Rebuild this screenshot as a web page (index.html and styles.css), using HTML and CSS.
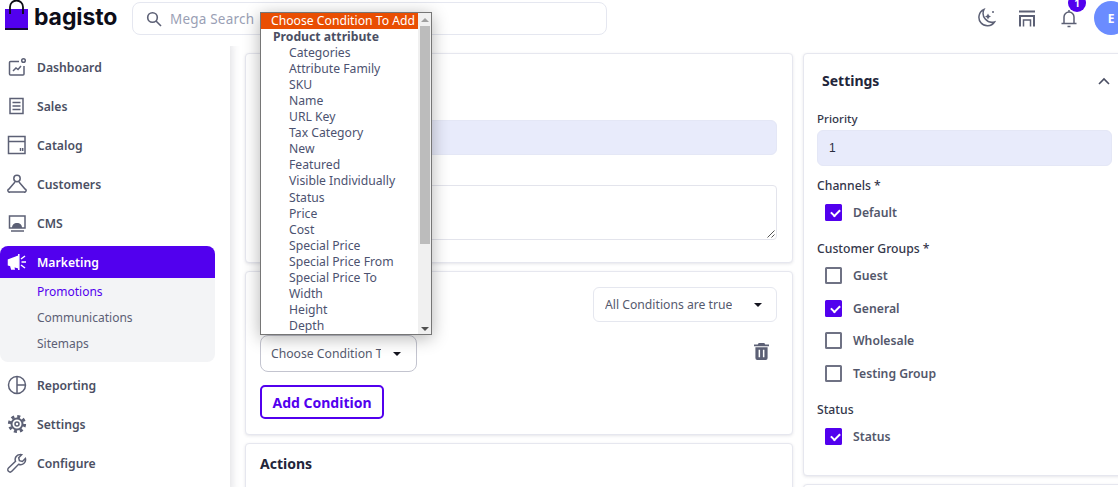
FILE: index.html
```html
<!DOCTYPE html>
<html lang="en">
<head>
<meta charset="utf-8">
<title>Bagisto - Cart rule</title>
<link rel="stylesheet" href="styles.css">
</head>
<body>
<header class="topbar">
  <div class="logo">
    <svg class="logo-bag" width="24" height="31" viewBox="0 0 24 31"><rect x="0" y="9" width="23" height="21" fill="#5200ee"/><rect x="0" y="28" width="23" height="2" fill="#15083a"/><path d="M5 14V7a6.500 6.500 0 0 1 13 0v7" fill="none" stroke="#0c0c14" stroke-width="1.800"/></svg>
    <span class="logo-text">bagisto</span>
  </div>
  <div class="search">
    <svg width="16" height="16" viewBox="0 0 16 16" fill="none" stroke="#5c6075" stroke-width="1.600"><circle cx="6.500" cy="6.500" r="4.800"/><path d="M10 10l5 5"/></svg>
    <span>Mega Search</span>
  </div>
  <div class="top-actions">
    <svg class="ic-moon" width="20" height="20" viewBox="0 0 20 20" fill="none" stroke="#5c6075" stroke-width="1.500"><path d="M8 1.500a8.500 8.500 0 1 0 10.500 12.500 9 9 0 0 1-10.500-12.500z"/><path d="M12 5.500l1 2 2 1-2 1-1 2-1-2-2-1 2-1z" fill="#5c6075" stroke="none"/><circle cx="17" cy="4" r="1" fill="#5c6075" stroke="none"/></svg>
    <svg class="ic-store" width="18" height="17" viewBox="0 0 18 17" fill="none" stroke="#5c6075" stroke-width="2"><path d="M1 1.500h16M1 6h16M2 6v10.500M16 6v10.500"/><path d="M5.500 16.500V10h7v6.500" stroke-width="1.500"/></svg>
    <span class="bell">
      <svg width="16" height="19" viewBox="0 0 16 19" fill="none" stroke="#5c6075" stroke-width="1.500"><path d="M3 14V8a5 5 0 0 1 10 0v6M0.500 14.500h15M8 1v2M6.500 17.500h3"/></svg>
      <span class="badge">1</span>
    </span>
    <span class="avatar">E</span>
  </div>
</header>

<div class="layout">
  <nav class="sidebar">
    <a class="nav-item">
      <svg class="nav-ic" viewBox="0 0 20 20" fill="none" stroke="#5c6075" stroke-width="1.500"><path d="M12 4.500H3.500a1 1 0 0 0-1 1V17a1 1 0 0 0 1 1H16a1 1 0 0 0 1-1V9"/><circle cx="16.500" cy="3.500" r="1.800"/><path d="M6 14l3-3 2 1.500 3-3.500"/></svg>
      <span>Dashboard</span>
    </a>
    <a class="nav-item">
      <svg class="nav-ic" viewBox="0 0 20 20" fill="none" stroke="#5c6075" stroke-width="1.500"><rect x="3" y="2.500" width="13" height="15"/><path d="M5.500 6.500h8M5.500 10h8M5.500 13.500h8"/></svg>
      <span>Sales</span>
    </a>
    <a class="nav-item">
      <svg class="nav-ic" viewBox="0 0 20 20" fill="none" stroke="#5c6075" stroke-width="1.500"><rect x="1.500" y="1.500" width="16.500" height="17"/><path d="M1.500 6.500h16.500M13.500 13v3M15.700 13v3"/></svg>
      <span>Catalog</span>
    </a>
    <a class="nav-item">
      <svg class="nav-ic" viewBox="0 0 20 20" fill="none" stroke="#5c6075" stroke-width="1.500"><circle cx="10" cy="4.500" r="3.200"/><path d="M8 8l-6 7a1.500 1.500 0 0 0 1 3h14a1.500 1.500 0 0 0 1-3l-6-7"/></svg>
      <span>Customers</span>
    </a>
    <a class="nav-item">
      <svg class="nav-ic" viewBox="0 0 20 20" fill="none" stroke="#5c6075" stroke-width="1.500"><rect x="2.500" y="3" width="15.500" height="12"/><path d="M5 15c0-3.500 2-5 5-5s5 1.500 5 5z" fill="#5c6075" stroke="none"/><path d="M4 18h13"/></svg>
      <span>CMS</span>
    </a>
    <div class="nav-group">
      <a class="nav-item active">
        <svg class="nav-ic" viewBox="0 0 20 20" fill="none" stroke="#fff" stroke-width="1.500"><path d="M1.500 8l9-3.500v11l-4-1.300 .6 2.800-2.400 0-1-3.500-2.200-.5z" fill="#fff"/><path d="M11.800 2v16M14 7l4-3M14.500 10h4.500M14 13l4 3"/></svg>
        <span>Marketing</span>
      </a>
      <div class="subnav">
        <a class="sub-item current">Promotions</a>
        <a class="sub-item">Communications</a>
        <a class="sub-item">Sitemaps</a>
      </div>
    </div>
    <a class="nav-item">
      <svg class="nav-ic" viewBox="0 0 20 20" fill="none" stroke="#5c6075" stroke-width="1.500"><circle cx="10" cy="10" r="8.500"/><path d="M10 1.500v17M10 10h8.500"/></svg>
      <span>Reporting</span>
    </a>
    <a class="nav-item">
      <svg class="nav-ic" viewBox="0 0 20 20" fill="none" stroke="#5c6075"><circle cx="10" cy="10" r="7.600" stroke-width="3" stroke-dasharray="3 2.970"/><circle cx="10" cy="10" r="5.500" stroke-width="2"/><circle cx="10" cy="10" r="2" stroke-width="1.500"/></svg>
      <span>Settings</span>
    </a>
    <a class="nav-item">
      <svg class="nav-ic" viewBox="0 0 20 20" fill="none" stroke="#5c6075" stroke-width="1.500"><path d="M13 1.500a5 5 0 0 0-4.500 6.800L1.500 15a2.300 2.300 0 0 0 3.300 3.300l6.800-7a5 5 0 0 0 6.800-5.800l-3 3-3-.8-.7-3 3-3a5 5 0 0 0-1.700-.200z"/></svg>
      <span>Configure</span>
    </a>
  </nav>

  <main class="content">
    <div class="col-main">
      <section class="card card-general">
        <h2 class="card-title">General</h2>
        <label class="field-label label-name">Name</label>
        <div class="input input-name"></div>
        <label class="field-label label-desc">Description</label>
        <div class="textarea">
          <svg class="grip" width="8" height="8" viewBox="0 0 8 8" stroke="#555" stroke-width="1"><path d="M7.500 .5L.5 7.500M7.500 4.500L4.500 7.500"/></svg>
        </div>
      </section>

      <section class="card card-conditions">
        <div class="cond-head">
          <h2 class="card-title">Conditions</h2>
          <div class="select select-all"><span class="select-text">All Conditions are true</span><i class="caret"></i></div>
        </div>
        <div class="cond-row">
          <div class="select select-cond"><span class="select-text">Choose Condition To Add</span><i class="caret"></i></div>
          <svg class="trash" width="15" height="17" viewBox="0 0 16 18"><path d="M5 0h6l1 1.500h4v2H0v-2h4zM1.500 4.500h13V16a2 2 0 0 1-2 2h-9a2 2 0 0 1-2-2z" fill="#5c6075"/><path d="M5.700 7v8M10.300 7v8" stroke="#fff" stroke-width="1.600"/></svg>
        </div>
        <button class="btn-outline" type="button">Add Condition</button>
      </section>

      <section class="card card-actions">
        <h2 class="card-title">Actions</h2>
      </section>
    </div>

    <aside class="col-side">
      <section class="card card-settings">
        <div class="settings-head">
          <h2 class="card-title">Settings</h2>
          <svg width="12" height="8" viewBox="0 0 12 8" fill="none" stroke="#4a4e63" stroke-width="1.600"><path d="M1 7l5-5 5 5"/></svg>
        </div>
        <label class="field-label side-label">Priority</label>
        <div class="input input-priority">1</div>
        <div class="group-label">Channels *</div>
        <div class="check-row first"><i class="check on"></i><span>Default</span></div>
        <div class="group-label groups">Customer Groups *</div>
        <div class="check-list">
          <div class="check-row"><i class="check"></i><span>Guest</span></div>
          <div class="check-row"><i class="check on"></i><span>General</span></div>
          <div class="check-row"><i class="check"></i><span>Wholesale</span></div>
          <div class="check-row"><i class="check"></i><span>Testing Group</span></div>
        </div>
        <div class="group-label status">Status</div>
        <div class="check-row first"><i class="check on"></i><span>Status</span></div>
      </section>
      <section class="card card-next"></section>
    </aside>
  </main>
</div>

<div class="dropdown">
  <div class="options">
    <div class="opt selected">Choose Condition To Add</div>
    <div class="opt group">Product attribute</div>
    <div class="opt">Categories</div>
    <div class="opt">Attribute Family</div>
    <div class="opt">SKU</div>
    <div class="opt">Name</div>
    <div class="opt">URL Key</div>
    <div class="opt">Tax Category</div>
    <div class="opt">New</div>
    <div class="opt">Featured</div>
    <div class="opt">Visible Individually</div>
    <div class="opt">Status</div>
    <div class="opt">Price</div>
    <div class="opt">Cost</div>
    <div class="opt">Special Price</div>
    <div class="opt">Special Price From</div>
    <div class="opt">Special Price To</div>
    <div class="opt">Width</div>
    <div class="opt">Height</div>
    <div class="opt">Depth</div>
  </div>
  <div class="scrollbar">
    <i class="arrow up"></i>
    <div class="thumb"></div>
    <i class="arrow down"></i>
  </div>
</div>
</body>
</html>
```
FILE: styles.css
```css
* { box-sizing: border-box; }
html, body { margin: 0; height: 487px; overflow: hidden; background: #fff; }
body { font-family: "Noto Sans", "Open Sans", sans-serif; color: #4b4f63; font-size: 13px; position: relative; }

.topbar { height: 36px; display: flex; align-items: flex-start; background: #fff; }
.logo { width: 132px; display: flex; padding-left: 5px; align-items: flex-start; flex: none; }
.logo-bag { display: block; flex: none; }
.logo-text { font-family: Inter, sans-serif; font-weight: 700; font-size: 23px; line-height: 30px; color: #0d0d18; margin-left: 5px; letter-spacing: -.1px; margin-top: 2px; }
.search { width: 475px; height: 33px; margin-top: 2px; border: 1px solid #e5e7f0; border-radius: 8px; display: flex; align-items: center; padding-left: 13px; gap: 8px; color: #9a9fb5; font-size: 13.500px; letter-spacing: .2px; }
.top-actions { margin-left: auto; display: flex; align-items: center; height: 36px; margin-right: -10px; }
.ic-moon { margin-right: 22px; }
.ic-store { margin-right: 25px; }
.bell { position: relative; display: block; height: 19px; margin-right: 17px; }
.bell svg { display: block; }
.badge { position: absolute; left: 7px; top: -15px; width: 18px; height: 18px; border-radius: 50%; background: #5200ee; color: #fff; font-size: 10px; font-weight: 700; line-height: 18px; text-align: center; }
.avatar { width: 34px; height: 34px; border-radius: 50%; background: #6b8cff; color: #fff; font-weight: 700; font-size: 12px; display: flex; align-items: center; justify-content: center; }

.layout { display: flex; height: 451px; }
.sidebar { width: 230px; flex: none; padding: 15px 15px 0 0; display: flex; flex-direction: column; gap: 7px; box-shadow: 2px 6px 8px rgba(60,60,90,.16); clip-path: inset(10px -12px 0 0); }
.nav-item { height: 32px; display: flex; align-items: center; padding-left: 7px; font-weight: 600; font-size: 12.200px; color: #4b4f63; }
.nav-ic { width: 20px; height: 20px; flex: none; margin-right: 10px; }
.nav-item.active { background: #5200ee; color: #fff; border-radius: 8px 8px 0 0; }
.subnav { background: #f3f4f6; border-radius: 0 0 8px 8px; height: 84px; padding: 1px 0 5px 37px; display: flex; flex-direction: column; }
.sub-item { height: 26px; line-height: 26px; font-size: 12px; color: #5c6075; }
.sub-item.current { color: #5200ee; }

.content { display: flex; gap: 10px; padding: 17px 0 0 15px; flex: none; width: 897px; align-items: flex-start; }
.col-main { width: 548px; flex: none; display: flex; flex-direction: column; gap: 8px; }
.col-side { width: 325px; flex: none; display: flex; flex-direction: column; gap: 8px; }
.card { background: #fff; border: 1px solid #e6e7ef; border-radius: 4px; box-shadow: 0 1px 3px rgba(50,50,80,.12); padding: 0 15px 0 14px; }
.card-title { margin: 0; font-size: 14px; font-weight: 700; color: #22253a; line-height: 20px; }

.card-general { height: 210px; padding-top: 14px; }
.field-label { display: block; font-size: 12px; font-weight: 500; line-height: 16px; color: #33364a; }
.label-name { margin-top: 14px; }
.input { height: 35px; border-radius: 6px; background: #e8ebfb; border: 1px solid #e4e7f6; }
.input-name { margin-top: 2px; }
.label-desc { margin-top: 11px; }
.textarea { position: relative; height: 55px; margin-top: 3px; border: 1px solid #e3e4ec; border-radius: 4px; }
.grip { position: absolute; right: 1px; bottom: 1px; }

.card-conditions { height: 164px; padding-top: 15px; }
.cond-head { display: flex; justify-content: space-between; align-items: center; height: 35px; }
.select { display: flex; align-items: center; justify-content: space-between; border-radius: 6px; border: 1px solid #e5e7ef; background: #fff; font-size: 12.200px; color: #555a6e; }
.select-text { overflow: hidden; white-space: nowrap; }
.select-all { width: 184px; height: 35px; padding: 0 14px 0 11px; }
.select-cond { width: 157px; height: 37px; padding: 0 15px 0 10px; border-color: #c3c4cf; border-radius: 8px; }
.select-cond .select-text { width: 110px; }
.caret { width: 0; height: 0; flex: none; border-left: 4.500px solid transparent; border-right: 4.500px solid transparent; border-top: 4.500px solid #14141f; }
.cond-row { display: flex; justify-content: space-between; align-items: center; margin-top: 13px; padding-right: 8px; }
.trash { display: block; margin-bottom: 5px; }
.btn-outline { display: block; margin-top: 13px; width: 124px; height: 34px; border: 2px solid #5200ee; border-radius: 5px; background: #fff; color: #5200ee; font: 700 14px "Noto Sans", sans-serif; padding: 0; }

.card-actions { height: 80px; padding-top: 10px; }

.card-settings { height: 423px; padding: 17px 15px 0 13px; }
.settings-head { display: flex; justify-content: space-between; align-items: center; padding: 0 2px 0 5px; height: 20px; margin-bottom: 20px; }
.side-label { font-size: 11.500px; }
.input-priority { height: 36px; margin-top: 3px; width: 295px; line-height: 34px; padding-left: 11px; color: #2a2d3e; font-size: 12px; font-family: "Liberation Sans", sans-serif; }
.group-label { font-size: 12.200px; line-height: 16px; font-weight: 500; color: #33364a; margin-top: 12px; }
.group-label.groups { margin-top: 20px; }
.group-label.status { margin-top: 20px; }
.check-row { display: flex; align-items: center; height: 17px; padding-left: 8px; gap: 11px; font-weight: 600; font-size: 12.200px; color: #53576b; }
.check-row.first { margin-top: 10px; }
.check-list { display: flex; flex-direction: column; gap: 15.700px; margin-top: 10px; }
.check { width: 17px; height: 17px; flex: none; border: 2px solid #6f7284; border-radius: 1.500px; position: relative; display: block; }
.check.on { background: #5200ee; border-color: #5200ee; }
.check.on::after { content: ""; position: absolute; left: 3.500px; top: 3px; width: 7px; height: 4px; border-left: 2px solid #fff; border-bottom: 2px solid #fff; transform: rotate(-45deg); }
.card-next { height: 60px; }

.dropdown { position: absolute; left: 260px; top: 12px; width: 172px; height: 323px; display: flex; background: #fff; border: 1px solid #767676; box-shadow: 0 3px 16px rgba(0,0,0,.3); overflow: hidden; }
.options { flex: 1; min-width: 0; padding-top: 0; }
.opt { height: 16.050px; line-height: 16px; padding-left: 28px; font-size: 12.200px; color: #4c5270; white-space: nowrap; }
.opt.selected { background: #e94e02; color: #fff; padding-left: 10px; }
.opt.group { font-weight: 700; padding-left: 12px; color: #4b4f63; }
.scrollbar { width: 13px; flex: none; background: #f0f0f0; display: flex; flex-direction: column; align-items: center; padding: 5px 0 3px; }
.thumb { width: 10px; height: 218px; background: #bcbcbc; margin-top: 4px; }
.arrow { width: 0; height: 0; display: block; border-left: 4px solid transparent; border-right: 4px solid transparent; }
.arrow.up { border-bottom: 4px solid #a0a0a0; }
.arrow.down { border-top: 4px solid #505050; margin-top: auto; }
```
